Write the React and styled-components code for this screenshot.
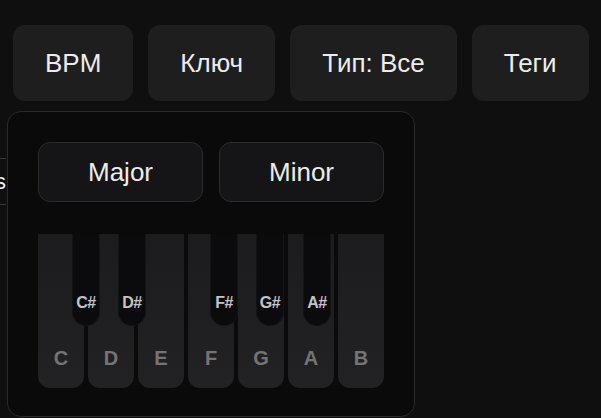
import styled, { createGlobalStyle } from 'styled-components'

const GlobalStyle = createGlobalStyle`
  html, body {
    margin: 0;
    background: #0f0f10;
    font-family: "Liberation Sans", Arial, sans-serif;
  }
  #root {
    height: 418px;
    overflow: hidden;
  }
`;

const Page = styled.div`
  position: relative;
  height: 418px;
  overflow: hidden;
`;

const Toolbar = styled.div`
  display: flex;
  gap: 15px;
  padding: 25px 13px 0;
`;

const FilterButton = styled.button`
  flex-shrink: 0;
  height: 76px;
  padding: 0 32px;
  border: none;
  border-radius: 12px;
  background: #1e1e1f;
  color: #ececec;
  font-family: inherit;
  font-size: 26px;
  white-space: nowrap;
  cursor: pointer;
`;

const ListRow = styled.div`
  margin-top: 57px;
  margin-left: -100px;
  width: 106px;
  height: 45px;
  display: flex;
  align-items: center;
  justify-content: flex-end;
  border-top: 1px solid #3a3a3c;
  border-bottom: 1px solid #3a3a3c;
  color: #f0f0f0;
  font-size: 22px;
  overflow: hidden;
`;

const KeyPopup = styled.div`
  position: absolute;
  top: 111px;
  left: 7px;
  width: 346px;
  padding: 30px 30px 28px;
  background: #0a0a0b;
  border: 1px solid #2a2a2d;
  border-radius: 14px;
`;

const ModeRow = styled.div`
  display: flex;
  gap: 16px;
`;

const ModeButton = styled.button`
  width: 165px;
  height: 60px;
  border: 1px solid #2c2c2f;
  border-radius: 12px;
  background: #151517;
  color: #ececec;
  font-family: inherit;
  font-size: 26px;
  cursor: pointer;
`;

const Piano = styled.div`
  position: relative;
  display: flex;
  gap: 4px;
  margin-top: 32px;
  height: 154px;
`;

const WhiteKey = styled.div`
  flex: 1;
  display: flex;
  align-items: flex-end;
  justify-content: center;
  padding-bottom: 18px;
  background: linear-gradient(#1c1c1e, #222224);
  border-radius: 0 0 12px 12px;
  color: #747477;
  font-weight: bold;
  font-size: 20px;
`;

const BlackKey = styled.div`
  position: absolute;
  top: 0;
  width: 28px;
  height: 92px;
  display: flex;
  align-items: flex-end;
  justify-content: center;
  padding-bottom: 13px;
  box-sizing: border-box;
  background: #0b0b0d;
  border: 1px solid #141416;
  border-top: none;
  border-radius: 0 0 14px 14px;
  color: #c4c4c6;
  font-weight: bold;
  font-size: 16px;
  letter-spacing: -0.5px;
`;

const whiteKeys = ['C', 'D', 'E', 'F', 'G', 'A', 'B'];
const blackKeys = [
  { name: 'C#', left: 34 },
  { name: 'D#', left: 80 },
  { name: 'F#', left: 172 },
  { name: 'G#', left: 218 },
  { name: 'A#', left: 265 },
];

const App = () => {
  return (
    <Page>
      <GlobalStyle />
      <Toolbar>
        <FilterButton>BPM</FilterButton>
        <FilterButton>Ключ</FilterButton>
        <FilterButton>Тип: Все</FilterButton>
        <FilterButton>Теги</FilterButton>
      </Toolbar>
      <ListRow>Beats</ListRow>
      <KeyPopup>
        <ModeRow>
          <ModeButton>Major</ModeButton>
          <ModeButton>Minor</ModeButton>
        </ModeRow>
        <Piano>
          {whiteKeys.map((k) => (
            <WhiteKey key={k}>{k}</WhiteKey>
          ))}
          {blackKeys.map((k) => (
            <BlackKey key={k.name} style={{ left: k.left }}>{k.name}</BlackKey>
          ))}
        </Piano>
      </KeyPopup>
    </Page>
  )
}

export default App;
